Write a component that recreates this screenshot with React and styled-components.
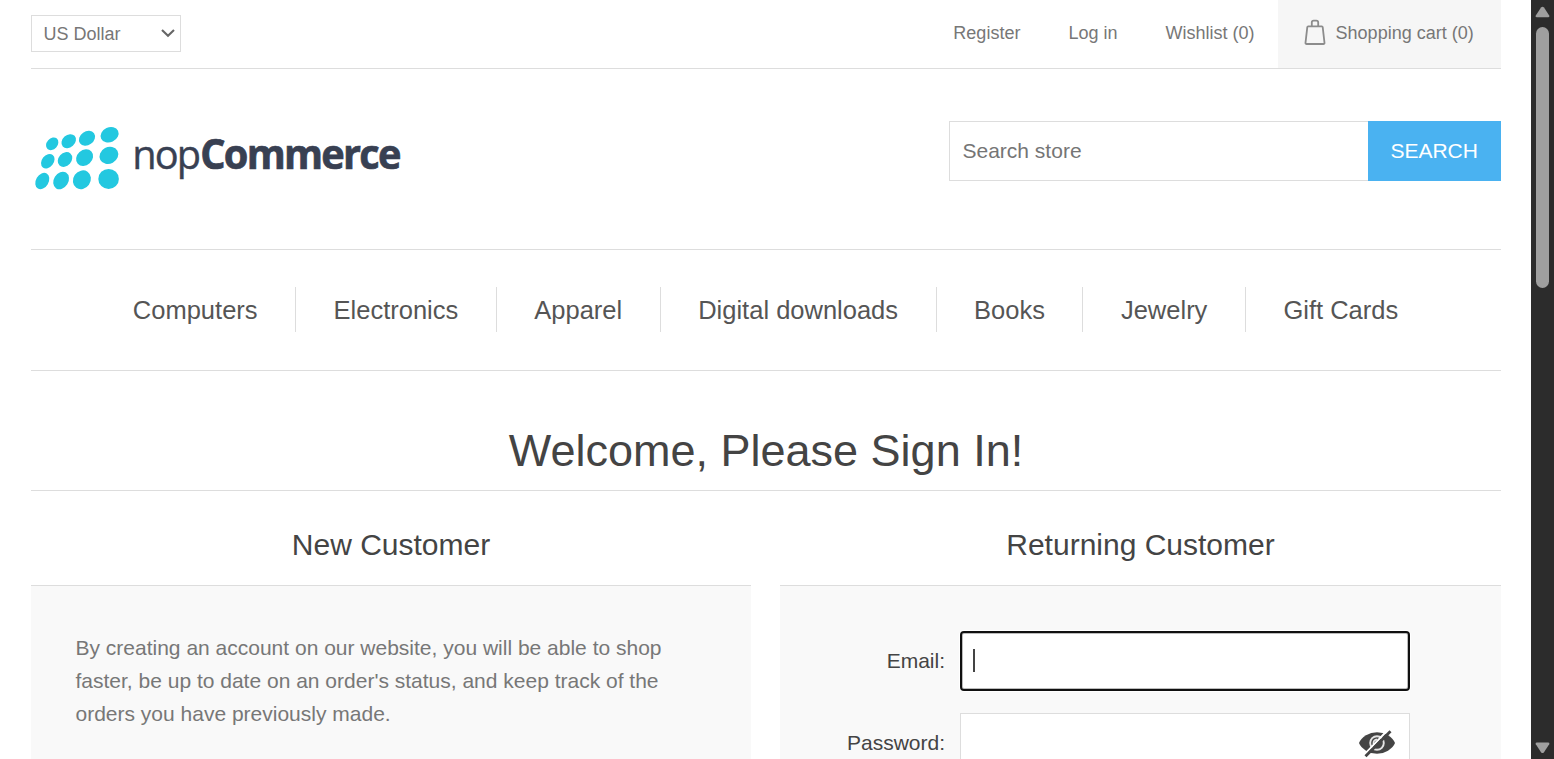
import React from "react";
import styled, { createGlobalStyle } from "styled-components";

const GlobalStyle = createGlobalStyle`
  * { box-sizing: border-box; }
  html, body { margin: 0; padding: 0; height: 759px; overflow: hidden; background: #fff; }
  body, input, button {
    font-family: "Liberation Sans", Arial, Helvetica, sans-serif;
  }
`;

const Window = styled.div`
  display: flex;
  height: 759px;
  overflow: hidden;
`;

const Page = styled.div`
  flex: 1;
  height: 759px;
  padding: 0 30px 0 31px;
  overflow: hidden;
`;

const TopBar = styled.header`
  display: flex;
  justify-content: space-between;
  height: 69px;
  border-bottom: 1px solid #ddd;
`;

const CurrencySelect = styled.div`
  display: flex;
  align-items: center;
  justify-content: space-between;
  width: 150px;
  height: 37px;
  margin-top: 15px;
  padding: 1px 5px 0 11.6px;
  border: 1px solid #ddd;
  font-size: 18px;
  color: #777;
`;

const Chevron = styled.svg`
  width: 14px;
  height: 10px;
  margin-bottom: 2px;
`;

const HeaderLinks = styled.nav`
  display: flex;
`;

const HeaderLink = styled.a`
  display: flex;
  align-items: center;
  height: 68px;
  padding: 0 23.6px 2px 24.4px;
  font-size: 18px;
  color: #777;
  white-space: nowrap;
`;

const CartLink = styled(HeaderLink)`
  width: 223px;
  padding: 0 0 2px 26px;
  background: #f6f6f6;
`;

const BagIcon = styled.svg`
  width: 22px;
  height: 28px;
  margin: 0 9.6px 3px 0;
`;

const BrandRow = styled.div`
  display: flex;
  justify-content: space-between;
  height: 181px;
  padding-top: 52px;
  border-bottom: 1px solid #ddd;
`;

const Logo = styled.svg`
  width: 380px;
  height: 75px;
  overflow: visible;
`;

const LogoText = styled.text`
  font-family: "Open Sans", "Noto Sans", sans-serif;
  font-size: 41px;
  font-weight: ${(p) => (p.$bold ? 700 : 400)};
  letter-spacing: ${(p) => (p.$bold ? "-1.8px" : "-2px")};
  fill: #384052;
  stroke: #384052;
  stroke-width: ${(p) => (p.$bold ? 0.7 : 0.4)};
`;

const SearchBox = styled.form`
  display: flex;
  width: 552px;
  height: 60px;
`;

const SearchInput = styled.input`
  flex: 1;
  min-width: 0;
  padding: 0 12.5px;
  border: 1px solid #ddd;
  border-right: 0;
  border-radius: 0;
  outline: 0;
  font-size: 21px;
  color: #777;
  &::placeholder { color: #757575; opacity: 1; }
`;

const SearchButton = styled.button`
  width: 133px;
  padding: 0 0.6px 0 0;
  border: 0;
  background: #4ab2f1;
  color: #fff;
  font-size: 21px;
`;

const Menu = styled.nav`
  display: flex;
  justify-content: center;
  align-items: flex-start;
  height: 121px;
  padding: 37px 1px 0 0;
  border-bottom: 1px solid #ddd;
`;

const MenuItem = styled.a`
  height: 45px;
  padding: 0 37.5px;
  line-height: 46px;
  font-size: 25.5px;
  color: #555;
  white-space: nowrap;
  & + & { border-left: 1px solid #ddd; }
`;

const PageTitle = styled.h1`
  height: 120px;
  margin: 0;
  padding-top: 54px;
  border-bottom: 1px solid #ddd;
  font-size: 45px;
  font-weight: 400;
  line-height: 52px;
  text-align: center;
  color: #444;
`;

const Columns = styled.main`
  display: grid;
  grid-template-columns: 720px 721px;
  column-gap: 29px;
`;

const ColumnTitle = styled.h2`
  height: 95px;
  margin: 0;
  padding-top: 36px;
  border-bottom: 1px solid #ddd;
  font-size: 30px;
  font-weight: 400;
  line-height: 36px;
  text-align: center;
  color: #444;
`;

const Panel = styled.div`
  height: 174px;
  padding: 45px 44.5px;
  background: #f9f9f9;
  font-size: 21px;
  color: #777;
  overflow: hidden;
`;

const Blurb = styled.p`
  margin: 0;
  line-height: 33px;
`;

const Field = styled.div`
  display: flex;
  align-items: center;
  height: 60px;
  margin-bottom: 22px;
`;

const FieldLabel = styled.label`
  width: 120.5px;
  margin-right: 15px;
  text-align: right;
  color: #444;
  white-space: nowrap;
`;

const FieldBox = styled.div`
  display: flex;
  align-items: center;
  width: 450px;
  height: 60px;
  padding: 0 13px 0 12px;
  background: #fff;
  border: ${(p) => (p.$focused ? "2px solid #101010" : "1px solid #ddd")};
  border-radius: ${(p) => (p.$focused ? "4px" : "0")};
  box-shadow: ${(p) => (p.$focused ? "0 0 0 1px #fff, inset 0 0 0 1px #bbb" : "none")};
  justify-content: ${(p) => (p.$focused ? "flex-start" : "flex-end")};
`;

const Caret = styled.span`
  width: 2px;
  height: 23px;
  margin-left: -1px;
  margin-bottom: 1px;
  background: #444;
`;

const Scrollbar = styled.aside`
  display: flex;
  flex-direction: column;
  align-items: center;
  width: 23px;
  height: 759px;
  padding: 6px 0 5px;
  background: #2c2c2c;
`;

const Thumb = styled.div`
  width: 13px;
  height: 261px;
  margin: 9px 0 auto;
  border-radius: 7px;
  background: #9f9f9f;
`;

const dots = [
  [32.2, 33.8, 5.4, 7], [48.7, 31.2, 6.2, 8], [67, 28.2, 6.8, 8.6], [89.6, 24.8, 7.4, 9.3],
  [27.8, 51.2, 5.9, 8], [45, 49.5, 6.5, 8.1], [64.6, 47.6, 7.6, 9.2], [88.9, 45.4, 8.3, 9.7],
  [22.3, 71, 6.3, 8.8], [41.1, 70.5, 7.3, 9.3], [61.9, 69.8, 8.6, 9.8], [88.6, 68.9, 10.3, 10],
];
const tilts = [42, 48, 55, 65, 38, 42, 48, 62, 30, 32, 35, 0];

const menuItems = [
  "Computers", "Electronics", "Apparel", "Digital downloads", "Books", "Jewelry", "Gift Cards",
];

function ScrollArrow({ down }) {
  return (
    <svg width="15" height="12" viewBox="0 0 15 12">
      <path
        d={down
          ? "M1.6 .5H13.4Q15 .8 14.2 2.3L9 10.2Q7.5 12 6 10.2L.8 2.3Q0 .8 1.6 .5Z"
          : "M1.6 11.2H13.4Q15 10.9 14.2 9.4L9 1.6Q7.5 0 6 1.6L.8 9.4Q0 10.9 1.6 11.2Z"}
        fill="#9f9f9f"
      />
    </svg>
  );
}

function HiddenEye() {
  return (
    <svg width="38" height="30" viewBox="0 0 38 30">
      <path d="M1 15Q2.5 11 8 7.3Q13 4.2 19 4.2Q25 4.2 30 7.3Q35.5 11 37 15Q35.5 19 30 22.7Q25 25.8 19 25.8Q13 25.8 8 22.7Q2.5 19 1 15Z" fill="#444" />
      <circle cx="19" cy="15" r="6.8" fill="none" stroke="#e4e4e4" strokeWidth="1.9" />
      <path d="M15.4 16Q15 11.9 19.3 11.4" fill="none" stroke="#e4e4e4" strokeWidth="1.6" />
      <path d="M5.3 27.6L29.8 2" stroke="#fff" strokeWidth="2" />
      <path d="M7.5 28.2L32.5 3.2" stroke="#444" strokeWidth="2.8" />
    </svg>
  );
}

export default function App() {
  return (
    <Window>
      <GlobalStyle />
      <Page>
        <TopBar>
          <CurrencySelect>
            US Dollar
            <Chevron viewBox="0 0 14 10">
              <path d="M1 2L7 7.8L13 2" fill="none" stroke="#666" strokeWidth="2.1" />
            </Chevron>
          </CurrencySelect>
          <HeaderLinks>
            <HeaderLink>Register</HeaderLink>
            <HeaderLink>Log in</HeaderLink>
            <HeaderLink>Wishlist (0)</HeaderLink>
            <CartLink>
              <BagIcon viewBox="0 0 22 28" fill="none" stroke="#8c8c8c" strokeWidth="1.8">
                <path d="M4.2 8.3H17.8Q18.6 8.3 18.7 9.1L20.5 24.8Q20.6 26 19.4 26H2.6Q1.4 26 1.5 24.8L3.3 9.1Q3.4 8.3 4.2 8.3Z" />
                <path d="M7.8 8.3V4.5Q7.8 2.7 9.6 2.7H12.4Q14.2 2.7 14.2 4.5V8.3" />
              </BagIcon>
              Shopping cart (0)
            </CartLink>
          </HeaderLinks>
        </TopBar>
        <BrandRow>
          <Logo viewBox="11 11 380 75">
            {dots.map(([x, y, rx, ry], i) => (
              <ellipse
                key={`${x}-${y}`}
                cx={x}
                cy={y}
                rx={rx}
                ry={ry}
                transform={`rotate(${tilts[i]} ${x} ${y})`}
                fill="#23c8e0"
              />
            ))}
            <LogoText transform="translate(112.3 58.6) scale(0.97 1)">nop</LogoText>
            <LogoText $bold transform="translate(180.2 58.6) scale(0.97 1)">Commerce</LogoText>
          </Logo>
          <SearchBox>
            <SearchInput placeholder="Search store" />
            <SearchButton type="button">SEARCH</SearchButton>
          </SearchBox>
        </BrandRow>
        <Menu>
          {menuItems.map((item) => (
            <MenuItem key={item}>{item}</MenuItem>
          ))}
        </Menu>
        <PageTitle>Welcome, Please Sign In!</PageTitle>
        <Columns>
          <section>
            <ColumnTitle>New Customer</ColumnTitle>
            <Panel>
              <Blurb>
                By creating an account on our website, you will be able to shop faster, be up to
                date on an order's status, and keep track of the orders you have previously made.
              </Blurb>
            </Panel>
          </section>
          <section>
            <ColumnTitle>Returning Customer</ColumnTitle>
            <Panel>
              <Field>
                <FieldLabel>Email:</FieldLabel>
                <FieldBox $focused><Caret /></FieldBox>
              </Field>
              <Field>
                <FieldLabel>Password:</FieldLabel>
                <FieldBox><HiddenEye /></FieldBox>
              </Field>
            </Panel>
          </section>
        </Columns>
      </Page>
      <Scrollbar>
        <ScrollArrow />
        <Thumb />
        <ScrollArrow down />
      </Scrollbar>
    </Window>
  );
}
